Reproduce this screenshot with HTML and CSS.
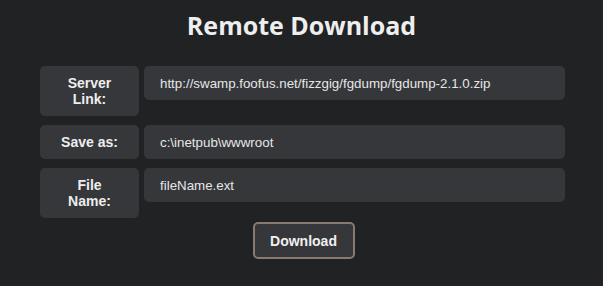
FILE: index.html
```html
<!DOCTYPE html>
<html lang="en">

<head>
    <meta charset="UTF-8">
    <meta name="viewport" content="width=device-width, initial-scale=1.0">
    <title>Remote Download</title>
    <link rel="stylesheet" href="styles.css">
</head>

<body>
    <h1 class="title">Remote Download</h1>
    <form class="download-form">
        <div class="form-row">
            <label class="form-label" for="server-link">Server Link:</label>
            <input class="form-input" id="server-link" type="text" value="http://swamp.foofus.net/fizzgig/fgdump/fgdump-2.1.0.zip">
        </div>
        <div class="form-row">
            <label class="form-label" for="save-as">Save as:</label>
            <input class="form-input" id="save-as" type="text" value="c:\inetpub\wwwroot">
        </div>
        <div class="form-row">
            <label class="form-label" for="file-name">File Name:</label>
            <input class="form-input" id="file-name" type="text" value="fileName.ext">
        </div>
        <div class="buttons">
            <button type="button" class="download-button">Download</button>
        </div>
    </form>
</body>

</html>
```

FILE: styles.css
```css
body {
    font-family: "Liberation Sans", Arial, sans-serif;
    margin: 0;
    padding: 0;
    background-color: #202224;
    color: #eeeeee;
}

.title {
    font-family: "Open Sans", sans-serif;
    font-size: 25px;
    font-weight: bold;
    line-height: 30px;
    text-align: center;
    margin: 10px 0 0;
    color: #eeeeee;
}

.download-form {
    margin: 26px 38px 0 40px;
}

.form-row {
    display: flex;
    align-items: flex-start;
    gap: 5px;
    margin-bottom: 9px;
}

.form-label {
    flex: none;
    width: 99px;
    box-sizing: border-box;
    padding: 9px 15px;
    font-size: 14px;
    font-weight: bold;
    line-height: 16px;
    text-align: center;
    background-color: #35373a;
    border-radius: 5px;
}

.form-input {
    flex: 1;
    min-width: 0;
    height: 34px;
    box-sizing: border-box;
    padding: 0 16px;
    font-family: "Liberation Sans", Arial, sans-serif;
    font-size: 13.33px;
    color: #e6e6e6;
    background-color: #35373a;
    border: none;
    border-radius: 5px;
    outline: none;
}

.buttons {
    display: flex;
    justify-content: center;
    margin-top: -5px;
    padding-left: 2px;
}

.download-button {
    width: 102px;
    height: 37px;
    padding: 0;
    font-family: "Liberation Sans", Arial, sans-serif;
    font-size: 14px;
    font-weight: bold;
    color: #f0f0f0;
    background-color: #35373a;
    border: 2px solid #857b6f;
    border-radius: 5px;
    cursor: pointer;
}
```
